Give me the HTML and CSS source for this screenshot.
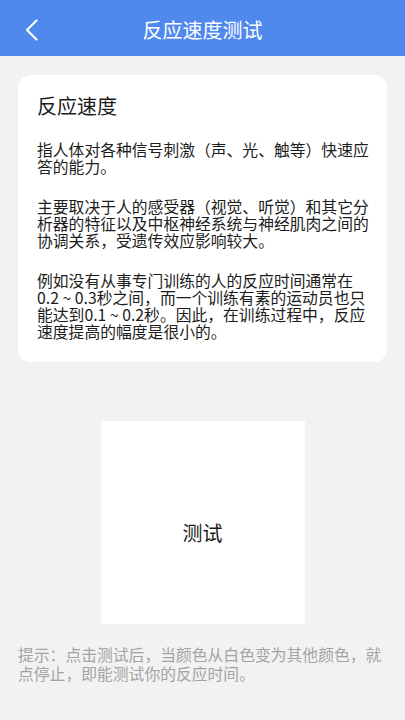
FILE: index.html
```html
<!DOCTYPE html>
<html lang="zh-CN">
<head>
<meta charset="utf-8">
<title>反应速度测试</title>
<link rel="stylesheet" href="styles.css">
</head>
<body>
<header class="topbar">
  <button class="back" aria-label="返回">
    <svg width="14" height="22" viewBox="0 0 14 22"><path d="M11.5 1.5 L2 11 L11.5 20.5" fill="none" stroke="#fff" stroke-width="2.2" stroke-linecap="round" stroke-linejoin="round"/></svg>
  </button>
  <h1 class="title">反应速度测试</h1>
  <span class="spacer"></span>
</header>
<main class="content">
  <section class="card">
    <h2 class="card-title">反应速度</h2>
    <p class="para">指人体对各种信号刺激（声、光、触等）快速应答的能力。</p>
    <p class="para">主要取决于人的感受器（视觉、听觉）和其它分析器的特征以及中枢神经系统与神经肌肉之间的协调关系，受遗传效应影响较大。</p>
    <p class="para">例如没有从事专门训练的人的反应时间通常在0.2&nbsp;~&nbsp;0.3秒之间，而一个训练有素的运动员也只能达到0.1&nbsp;~&nbsp;0.2秒。因此，在训练过程中，反应速度提高的幅度是很小的。</p>
  </section>
  <div class="test-wrap">
    <div class="test-box">测试</div>
  </div>
  <p class="hint">提示：点击测试后，当颜色从白色变为其他颜色，就点停止，即能测试你的反应时间。</p>
</main>
</body>
</html>
```

FILE: styles.css
```css
html, body {
  margin: 0;
  padding: 0;
}
body {
  background: #f2f2f2;
  font-family: "Noto Sans CJK SC", "Noto Sans", sans-serif;
  color: #1c1c1c;
  width: 405px;
  min-height: 720px;
}
.topbar {
  height: 56px;
  background: #5089ee;
  display: grid;
  grid-template-columns: 56px 1fr 56px;
  align-items: center;
}
.back {
  border: 0;
  background: none;
  padding: 0 0 0 25px;
  height: 56px;
  display: flex;
  align-items: center;
  justify-content: flex-start;
}
.back svg {
  display: block;
  margin-top: 2px;
}
.title {
  margin: 0;
  text-align: center;
  color: #fff;
  font-size: 20px;
  font-weight: 400;
  line-height: 56px;
  padding-top: 2px;
}
.content {
  padding: 19px 18px 0;
}
.card {
  background: #fff;
  border-radius: 13px;
  padding: 18px 15px 22px 19px;
}
.card-title {
  margin: 0 0 22px;
  font-size: 20px;
  font-weight: 400;
  line-height: 26px;
}
.para {
  margin: 0 0 23px;
  font-size: 15.8px;
  line-height: 17px;
}
.para:last-child {
  margin-bottom: 0;
}
.test-wrap {
  display: flex;
  justify-content: center;
  padding-top: 59px;
}
.test-box {
  width: 204px;
  height: 203px;
  background: #fff;
  display: flex;
  align-items: center;
  justify-content: center;
  box-sizing: border-box;
  padding-top: 20px;
  font-size: 20px;
  color: #1a1a1a;
}
.hint {
  margin: 21px 0 0;
  font-size: 15.8px;
  line-height: 19px;
  color: #a3a3a3;
}
```
